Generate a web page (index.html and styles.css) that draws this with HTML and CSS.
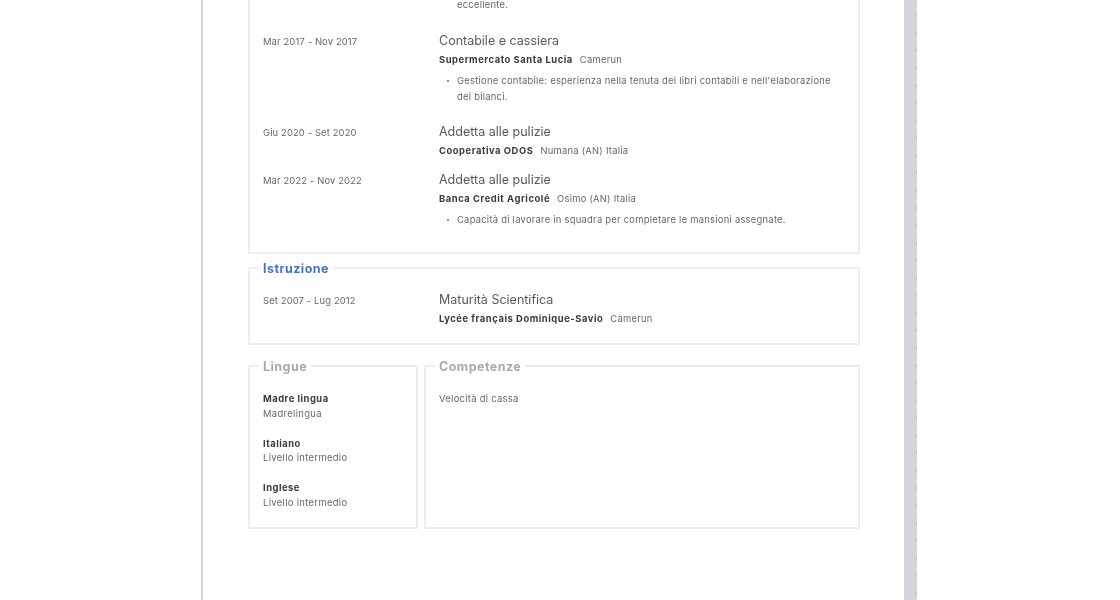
FILE: index.html
```html
<!DOCTYPE html>
<html lang="it">
<head>
<meta charset="utf-8">
<title>Curriculum</title>
<link rel="stylesheet" href="styles.css">
</head>
<body>
<div class="page">
  <main class="sheet">
    <section class="box box-cut">
      <ul class="tasks tasks-cut"><li class="no-dot">eccellente.</li></ul>
      <div class="row">
        <div class="date">Mar 2017 - Nov 2017</div>
        <div class="body">
          <h3 class="title">Contabile e cassiera</h3>
          <p class="org"><b>Supermercato Santa Lucia</b><span>Camerun</span></p>
          <ul class="tasks"><li>Gestione contabile: esperienza nella tenuta dei libri contabili e nell'elaborazione dei bilanci.</li></ul>
        </div>
      </div>
      <div class="row">
        <div class="date">Giu 2020 - Set 2020</div>
        <div class="body">
          <h3 class="title">Addetta alle pulizie</h3>
          <p class="org"><b>Cooperativa ODOS</b><span>Numana (AN) Italia</span></p>
        </div>
      </div>
      <div class="row">
        <div class="date">Mar 2022 - Nov 2022</div>
        <div class="body">
          <h3 class="title">Addetta alle pulizie</h3>
          <p class="org"><b>Banca Credit Agricolé</b><span>Osimo (AN) Italia</span></p>
          <ul class="tasks"><li>Capacità di lavorare in squadra per completare le mansioni assegnate.</li></ul>
        </div>
      </div>
    </section>
    <fieldset class="box box-edu">
      <legend class="legend legend-blue">Istruzione</legend>
      <div class="row">
        <div class="date">Set 2007 - Lug 2012</div>
        <div class="body">
          <h3 class="title">Maturità Scientifica</h3>
          <p class="org"><b>Lycée français Dominique-Savio</b><span>Camerun</span></p>
        </div>
      </div>
    </fieldset>
    <div class="cols">
      <fieldset class="box box-col">
        <legend class="legend">Lingue</legend>
        <div class="lang"><b>Madre lingua</b><span>Madrelingua</span></div>
        <div class="lang"><b>Italiano</b><span>Livello intermedio</span></div>
        <div class="lang"><b>Inglese</b><span>Livello intermedio</span></div>
      </fieldset>
      <fieldset class="box box-col">
        <legend class="legend">Competenze</legend>
        <div class="skill">Velocità di cassa</div>
      </fieldset>
    </div>
  </main>
  <div class="strip"></div>
</div>
</body>
</html>
```
FILE: styles.css
```css
* { box-sizing: border-box; }
html, body { margin: 0; height: 600px; overflow: hidden; background: #fff; }
body { font-family: "Inter", "Liberation Sans", sans-serif; font-size: 9.4px; color: #666; }
.page { display: flex; height: 600px; padding-left: 201px; filter: blur(0.5px); }
.sheet { width: 703px; height: 600px; border-left: 2px solid #d4d4d4; padding: 0 44px 0 45px; flex: none; }
.strip {
  width: 13px; flex: none;
  background:
    repeating-linear-gradient(180deg, transparent 0 14px, #c9ced3 14px 17.5px) right top / 3px 100% no-repeat,
    #d3d7db;
}
.box { border: 2px solid #eeeeee; margin: 0; min-width: 0; padding: 12px 14px 6px 13px; }
.box-cut { border-top: 0; margin-top: -4px; padding-top: 1px; padding-bottom: 8px; }
.box-edu { margin-top: 5px; }
.legend { margin-left: -4px; padding: 2px 4px 0; font-size: 12.5px; line-height: 16px; font-weight: 700; letter-spacing: 0.45px; color: #aaa; }
.legend-blue { color: #4472d4; }
.row { display: flex; padding-bottom: 8px; }
.date { width: 176px; flex: none; padding-top: 1.5px; font-size: 9.4px; line-height: 20px; letter-spacing: 0.15px; color: #666; }
.body { flex: 1; min-width: 0; }
.title { margin: 0; padding-top: 1px; font-size: 12.5px; line-height: 19px; font-weight: 400; color: #5a5a5a; }
.org { margin: 0; font-size: 9.4px; line-height: 20px; letter-spacing: 0.25px; color: #666; }
.org b { color: #3a3a3a; font-weight: 700; letter-spacing: 0.55px; margin-right: 7px; }
.tasks { list-style: none; margin: 3px 0 8px; padding: 0 0 0 18px; font-size: 9.4px; line-height: 16px; letter-spacing: 0.26px; color: #666; }
.tasks li { position: relative; }
.tasks li::before { content: ""; position: absolute; left: -10px; top: 7px; width: 2px; height: 2px; border-radius: 50%; background: #777; }
.tasks li.no-dot::before { display: none; }
.tasks-cut { margin: 0 0 17px 176px; }
.cols { display: grid; grid-template-columns: 170px 436px; gap: 6px; margin-top: 12px; }
.box-col { padding: 17.3px 14px 16.7px 13px; }
.lang { margin-bottom: 15.5px; line-height: 14.5px; letter-spacing: 0.35px; }
.lang:last-child { margin-bottom: 0; }
.lang b { display: block; color: #3a3a3a; font-weight: 700; letter-spacing: 0.5px; }
.lang span { display: block; }
.skill { line-height: 14.5px; letter-spacing: 0.3px; }
```
